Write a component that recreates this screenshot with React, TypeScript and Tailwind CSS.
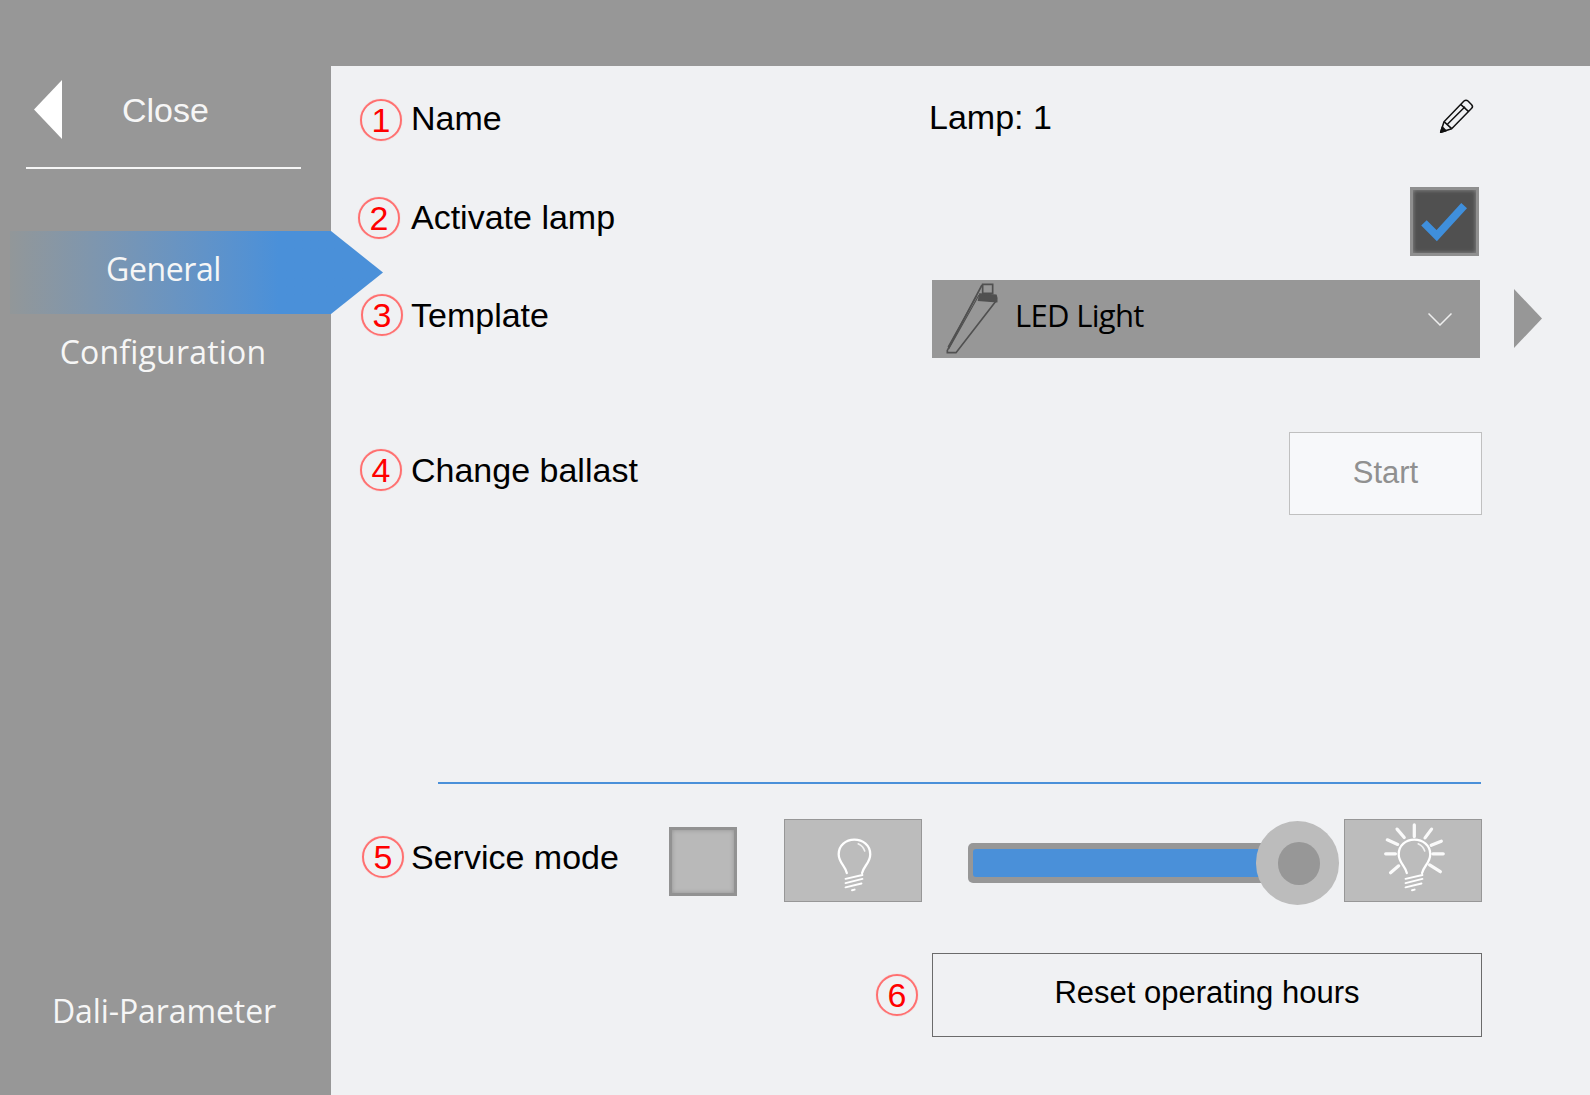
const Circle = ({ n, className }: { n: number; className: string }) => (
  <div className={`flex h-[42px] w-[42px] shrink-0 items-center justify-center rounded-full border-2 border-[#ff7070] font-['Liberation_Sans',sans-serif] text-[34px] leading-none text-[#ff0000] shadow-[0_0_1px_#ff9a9a] ${className}`}>
    {n}
  </div>
);

const Bulb = ({ rays }: { rays?: boolean }) => (
  <svg viewBox="-48 27 414 249" className="h-full w-full" fill="none" stroke="#fff" strokeLinecap="round">
    <path d="M140 190C136 168 115 158 115 132C115 105 137 87 163 87C190 87 212 105 212 132C212 158 192 168 187 190" strokeWidth="7" />
    <path d="M175 100C185 105 192 112 195 122" strokeWidth="5" opacity="0.8" />
    <path d="M136 208L188 196M136 221L188 208M136 234L185 222" strokeWidth="6" />
    <path d="M156 243L164 241" strokeWidth="6" />
    {rays && (
      <path d="M163 42V78M110 55L132 81M216 55L196 82M80 88L112 102M246 92L215 105M75 131H105M220 131H252M90 189L115 168M243 186L210 165" strokeWidth="10" opacity="0.92" />
    )}
  </svg>
);

const App = () => (
  <div className="flex h-[1095px] w-[1590px] flex-col overflow-hidden bg-[#979797] font-['Liberation_Sans',sans-serif] text-[34px] text-black">
    <div className="h-[66px] shrink-0" />
    <div className="flex flex-1">
      <aside className="flex w-[331px] shrink-0 flex-col font-['Open_Sans',sans-serif] text-[32px] text-[#f6f6f6]">
        <div className="ml-[26px] mr-[30px] flex h-[103px] items-start border-b-2 border-[#f6f6f6]">
          <svg viewBox="0 0 28 59" className="ml-[8px] mt-[14px] h-[59px] w-[28px]"><path d="M28 0V59L0 29.5Z" fill="#fff" /></svg>
          <span className="ml-[60px] mt-[20px] font-['Liberation_Sans',sans-serif] text-[34px] leading-[48px]">Close</span>
        </div>
        <div className="relative z-10 ml-[10px] mt-[62px] flex h-[83px] w-[373px] items-center bg-linear-to-r from-[#929799] to-[#4a90d9] to-[72%] [clip-path:polygon(0_0,321px_0,100%_50%,321px_100%,0_100%)]">
          <span className="w-[307px] pb-[8px] text-center tracking-[-0.4px]">General</span>
        </div>
        <div className="mt-[14px] pr-[5px] text-center tracking-[0.2px]">Configuration</div>
        <div className="mb-[60px] mt-auto pr-[3px] text-center tracking-[-0.1px]">Dali-Parameter</div>
      </aside>

      <main className="relative flex-1 bg-[#f0f1f3]">
        <div className="mt-[33px] flex h-[42px] items-center">
          <Circle n={1} className="ml-[29px]" />
          <span className="ml-[9px] w-[518px] pb-[4px]">Name</span>
          <span className="w-[491px] pb-[5px]">Lamp: 1</span>
          <svg viewBox="0 0 210 150" className="mb-[8px] h-[50px] w-[70px] shrink-0" fill="none" stroke="#111" strokeWidth="4.5" strokeLinejoin="round">
            <path d="M62 124L72 92L132 30Q138 25 144 30L155 41Q160 47 155 52L95 113Z" />
            <path d="M72 92L95 113M122 40L146 62M83 99L135 47" />
            <path d="M62 124L67 108L78 119Z" fill="#111" />
          </svg>
        </div>

        <div className="mt-[46px] flex h-[69px] items-center">
          <Circle n={2} className="mb-[7px] ml-[27px]" />
          <span className="ml-[11px] pb-[9px]">Activate lamp</span>
          <div className="ml-auto mr-[111px] flex h-[69px] w-[69px] items-center justify-center border-[3px] border-[#8f8f8f] bg-[#505050] shadow-[inset_0_0_4px_#8f8f8f]">
            <svg viewBox="0 0 69 69" className="h-[63px] w-[63px]"><path d="M12 36L26 50L56 17" fill="none" stroke="#3f8fdc" strokeWidth="8.5" /></svg>
          </div>
        </div>

        <div className="mt-[24px] flex h-[78px] items-center">
          <Circle n={3} className="mb-[8px] ml-[30px]" />
          <span className="ml-[8px] pb-[7px]">Template</span>
          <div className="ml-auto mr-[110px] flex h-[78px] w-[548px] items-center bg-[#979797] font-['Open_Sans',sans-serif] text-[31px]">
            <svg viewBox="6 15 240 234" className="h-[78px] w-[80px] shrink-0" fill="none" stroke="#505050" strokeWidth="5">
              <path d="M158 28H188V55H158Z" />
              <path d="M156 30L52 226L52 233H78L198 78" />
              <path d="M147 60L56 222M140 62L54 216" strokeWidth="3.5" />
              <path d="M150 57L198 61Q202 70 200 80L146 76Z" fill="#505050" />
            </svg>
            <span className="ml-[3px] pb-[8px] tracking-[-0.7px]">LED Light</span>
            <svg viewBox="0 0 24 13" className="ml-auto mr-[28px] mt-[1px] h-[13px] w-[24px]" fill="none" stroke="#eee" strokeWidth="1.5"><path d="M.5.5L12 12L23.5.5" /></svg>
          </div>
          <svg viewBox="0 0 28 59" className="absolute left-[1183px] top-[223px] h-[59px] w-[28px]"><path d="M0 0V59L28 29.5Z" fill="#979797" /></svg>
        </div>

        <div className="mt-[74px] flex h-[83px] items-center">
          <Circle n={4} className="mb-[7px] ml-[29px]" />
          <span className="ml-[9px] pb-[7px]">Change ballast</span>
          <div className="ml-auto mr-[108px] flex h-[83px] w-[193px] items-center justify-center border border-[#c0c0c0] bg-[#f7f8fa] pb-[1px] text-[31px] text-[#909090]">Start</div>
        </div>

        <div className="ml-[107px] mr-[109px] mt-[267px] h-[2px] bg-[#4a90d9]" />

        <div className="mt-[35px] flex h-[86px] items-center">
          <Circle n={5} className="mb-[11px] ml-[31px]" />
          <span className="ml-[7px] w-[258px] pb-[9px]">Service mode</span>
          <div className="mb-[2px] h-[69px] w-[68px] border-[3px] border-[#929292] bg-[#b9b9b9] shadow-[inset_0_0_4px_#929292]" />
          <div className="mb-[3px] ml-[47px] h-[83px] w-[138px] border border-[#979797] bg-[#bcbcbc]"><Bulb /></div>
          <div className="relative ml-[46px] mt-[2px] flex h-[84px] w-[371px] items-center">
            <div className="flex h-[40px] w-[330px] items-center rounded-[5px] bg-[#979797] pl-[5px]">
              <div className="h-[28px] w-full rounded-[3px] bg-[#4a90d9]" />
            </div>
            <div className="absolute right-0 top-0 flex h-[84px] w-[83px] items-center justify-center rounded-full bg-[#bcbcbc] pl-[2px]">
              <div className="h-[43px] w-[42px] rounded-full bg-[#979797]" />
            </div>
          </div>
          <div className="mb-[3px] ml-[5px] h-[83px] w-[138px] border border-[#979797] bg-[#bcbcbc]"><Bulb rays /></div>
        </div>

        <div className="mr-[108px] mt-[48px] flex h-[84px] items-center justify-end">
          <Circle n={6} />
          <div className="ml-[14px] flex h-[84px] w-[550px] items-center justify-center border border-[#6b6b6b] pb-[4px] text-[31px]">Reset operating hours</div>
        </div>
      </main>
    </div>
  </div>
);

export default App;
